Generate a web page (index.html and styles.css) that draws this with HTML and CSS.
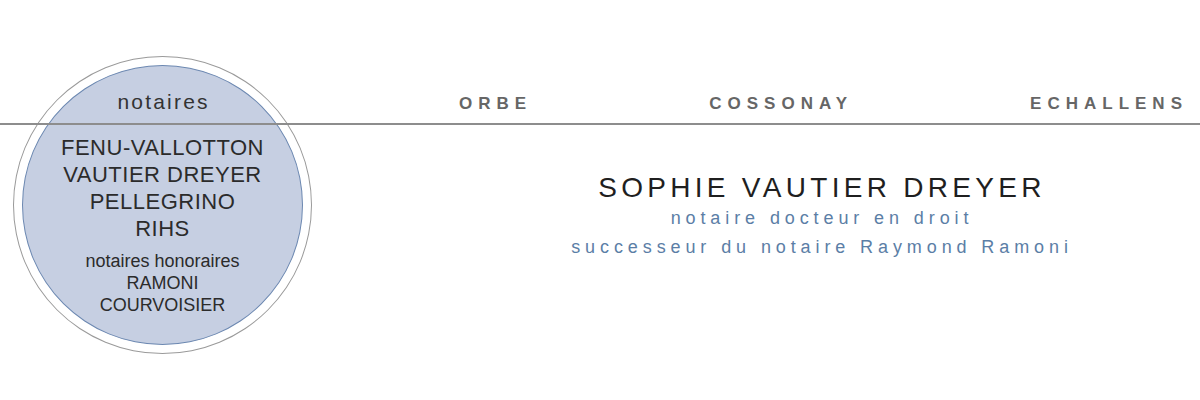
FILE: index.html
```html
<!DOCTYPE html>
<html lang="fr">
<head>
<meta charset="utf-8">
<title>Notaires</title>
<link rel="stylesheet" href="styles.css">
</head>
<body>
<div class="page">
  <aside class="seal">
    <div class="seal-inner">
      <div class="seal-title">notaires</div>
      <div class="names">
        <div>FENU-VALLOTTON</div>
        <div>VAUTIER DREYER</div>
        <div>PELLEGRINO</div>
        <div>RIHS</div>
      </div>
      <div class="honor">
        <div>notaires honoraires</div>
        <div>RAMONI</div>
        <div>COURVOISIER</div>
      </div>
    </div>
  </aside>
  <main class="main">
    <nav class="nav">
      <a class="nav-item">ORBE</a>
      <a class="nav-item">COSSONAY</a>
      <a class="nav-item">ECHALLENS</a>
    </nav>
    <section class="intro">
      <h1 class="name">SOPHIE VAUTIER DREYER</h1>
      <p class="sub">notaire docteur en droit</p>
      <p class="sub">successeur du notaire Raymond Ramoni</p>
    </section>
  </main>
  <div class="rule"></div>
</div>
</body>
</html>
```
FILE: styles.css
```css
html, body {
  margin: 0;
  padding: 0;
  background: #ffffff;
}

body {
  font-family: "Liberation Sans", Arial, Helvetica, sans-serif;
  color: #2a2a2a;
}

.page {
  position: relative;
  display: flex;
  width: 1200px;
  height: 400px;
  overflow: hidden;
}

.seal {
  flex: 0 0 auto;
  box-sizing: border-box;
  width: 299px;
  height: 298px;
  margin: 56px 0 0 13px;
  padding: 8px;
  border: 1.4px solid #9a9a9a;
  border-radius: 50%;
}

.seal-inner {
  box-sizing: border-box;
  width: 100%;
  height: 100%;
  border-radius: 50%;
  background: #c6cfe2;
  border: 1.5px solid #6c88b1;
  display: flex;
  flex-direction: column;
  align-items: center;
  padding-top: 23px;
  text-align: center;
}

.seal-title {
  font-size: 21px;
  line-height: 25px;
  letter-spacing: 2.2px;
  color: #333333;
  padding-left: 2.2px;
}

.names {
  margin-top: 20px;
  font-size: 22px;
  line-height: 27px;
  letter-spacing: 0.5px;
  color: #2b2b2b;
}

.honor {
  margin-top: 8px;
  font-size: 18px;
  line-height: 22px;
  color: #2b2b2b;
}

.main {
  flex: 1 1 auto;
  display: flex;
  flex-direction: column;
}

.nav {
  height: 124px;
  box-sizing: border-box;
  display: flex;
  justify-content: space-between;
  align-items: flex-end;
  padding: 0 12px 11px 147px;
}

.nav-item {
  font-size: 17px;
  line-height: 19px;
  font-weight: bold;
  letter-spacing: 6px;
  color: #666666;
  text-decoration: none;
}

.intro {
  padding-left: 132px;
  margin-top: 52px;
  text-align: center;
}

.name {
  margin: 0 0 4px;
  font-size: 28px;
  line-height: 24px;
  font-weight: normal;
  letter-spacing: 4.3px;
  color: #1f1f1f;
}

.sub {
  margin: 0;
  font-size: 18px;
  line-height: 29px;
  letter-spacing: 4.9px;
  color: #5b7ea6;
}

.rule {
  position: absolute;
  left: 0;
  right: 0;
  top: 123px;
  height: 1.5px;
  background: #8d8d8d;
}
```
